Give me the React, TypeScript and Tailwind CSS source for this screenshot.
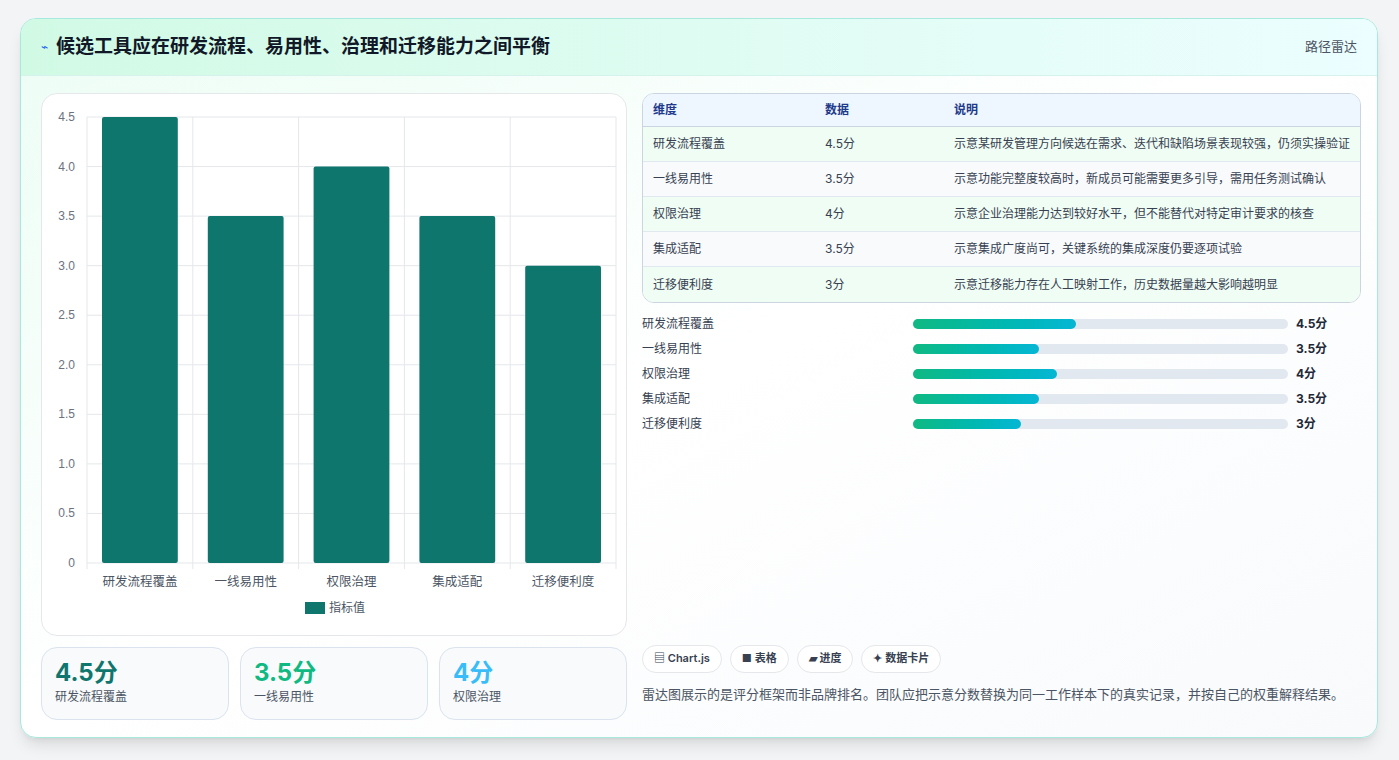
import React from "react";

const rows = [
  ["研发流程覆盖", "4.5分", "示意某研发管理方向候选在需求、迭代和缺陷场景表现较强，仍须实操验证"],
  ["一线易用性", "3.5分", "示意功能完整度较高时，新成员可能需要更多引导，需用任务测试确认"],
  ["权限治理", "4分", "示意企业治理能力达到较好水平，但不能替代对特定审计要求的核查"],
  ["集成适配", "3.5分", "示意集成广度尚可，关键系统的集成深度仍要逐项试验"],
  ["迁移便利度", "3分", "示意迁移能力存在人工映射工作，历史数据量越大影响越明显"],
];
const vals = [4.5, 3.5, 4, 3.5, 3];
const fills = [163, 126, 144, 126, 108];

function Chart() {
  // coordinates relative to card (40,93)
  const x0 = 45, x1 = 574, yTop = 23, yBot = 469;
  const ticks = [0, 0.5, 1, 1.5, 2, 2.5, 3, 3.5, 4, 4.5];
  const cw = (x1 - x0) / 5;
  return (
    <svg width="586" height="541" className="block">
      {ticks.map((t) => {
        const y = yBot - (t / 4.5) * (yBot - yTop);
        return (
          <g key={t}>
            <line x1={x0} x2={x1} y1={y} y2={y} stroke="#e5e7eb" />
            <text x={x0 - 12} y={y + 4} textAnchor="end" fontSize="12" fill="#6b7280" fontFamily="Liberation Sans, sans-serif">
              {t === 0 ? "0" : t.toFixed(1)}
            </text>
          </g>
        );
      })}
      {[0, 1, 2, 3, 4, 5].map((i) => (
        <line key={i} x1={x0 + i * cw} x2={x0 + i * cw} y1={yTop} y2={yBot + 6} stroke="#e5e7eb" />
      ))}
      {vals.map((v, i) => {
        const y = yBot - (v / 4.5) * (yBot - yTop);
        return <rect key={i} x={x0 + i * cw + 15} y={y} width={cw - 30} height={yBot - y} rx="2" fill="#0f766e" />;
      })}
      {rows.map((r, i) => (
        <text key={i} x={x0 + i * cw + cw / 2} y={492} textAnchor="middle" fontSize="12.5" fill="#4b5563" fontFamily="Noto Sans CJK SC, sans-serif">
          {r[0]}
        </text>
      ))}
      <rect x="263" y="508" width="20" height="12" fill="#0f766e" />
      <text x="287" y="518" fontSize="12" fill="#4b5563" fontFamily="Noto Sans CJK SC, sans-serif">指标值</text>
    </svg>
  );
}

export default function App() {
  return (
    <div className="w-[1399px] h-[760px] bg-[#f3f4f6] p-[18px_20px] pl-[20px] pt-[18px]" style={{ fontFamily: "Inter, 'Noto Sans CJK SC', sans-serif" }}>
      <div className="w-[1358px] h-[720px] rounded-2xl border border-[#a7e9dd] bg-gradient-to-br from-[#ecfdf5] via-white to-[#f8fafc] shadow-lg overflow-hidden flex flex-col">
        <div className="h-[57px] shrink-0 flex items-center justify-between px-5 bg-gradient-to-r from-[#d1fae5] to-[#ecfeff] border-b border-[#d5f3ec]">
          <div className="flex items-center gap-2">
            <span className="text-[#2563eb] text-xs">⌁</span>
            <span className="text-[19px] font-bold text-[#111827]">候选工具应在研发流程、易用性、治理和迁移能力之间平衡</span>
          </div>
          <span className="text-[13px] text-[#4b5563]">路径雷达</span>
        </div>
        <div className="flex gap-[15px] px-5 pt-[17px]">
          <div className="w-[586px] flex flex-col gap-[11px]">
            <div className="h-[543px] rounded-2xl border border-[#e5e7eb] bg-white">
              <Chart />
            </div>
            <div className="flex gap-[11px]">
              {[
                ["4.5分", "研发流程覆盖", "text-[#0f766e]"],
                ["3.5分", "一线易用性", "text-[#10b981]"],
                ["4分", "权限治理", "text-[#38bdf8]"],
              ].map(([v, l, c]) => (
                <div key={l} className="w-[189px] h-[73px] rounded-2xl border border-[#dbe3ee] bg-[#f8fafc] px-[13px] pt-[10px]">
                  <div className={`text-[24px] font-bold leading-[30px] ${c}`}>{v}</div>
                  <div className="text-[12px] text-[#4b5563]">{l}</div>
                </div>
              ))}
            </div>
          </div>
          <div className="flex-1 flex flex-col">
            <div className="w-[719px] rounded-xl border border-[#cbd5e1] overflow-hidden bg-white text-[12px] text-[#374151]">
              <div className="flex h-[33px] items-center bg-[#eef6ff] text-[#1e3a8a] font-semibold border-b border-[#cbd5e1]">
                <div className="w-[172px] pl-[10px]">维度</div>
                <div className="w-[129px] pl-[10px]">数据</div>
                <div className="pl-[10px]">说明</div>
              </div>
              {rows.map((r, i) => (
                <div key={i} className={`flex h-[35px] items-center ${i % 2 ? "bg-[#f8fafc]" : "bg-[#f0fdf4]"} ${i < 4 ? "border-b border-[#e2e8f0]" : ""}`}>
                  <div className="w-[172px] pl-[10px]">{r[0]}</div>
                  <div className="w-[129px] pl-[10px]">{r[1]}</div>
                  <div className="pl-[10px] whitespace-nowrap">{r[2]}</div>
                </div>
              ))}
            </div>
            <div className="flex flex-col gap-[8px] mt-[12px] text-[12px]">
              {rows.map((r, i) => (
                <div key={i} className="flex items-center h-[17px]">
                  <div className="w-[271px] text-[#374151]">{r[0]}</div>
                  <div className="w-[375px] h-[10px] rounded-full bg-[#e2e8f0]">
                    <div className="h-full rounded-full bg-gradient-to-r from-[#10b981] to-[#06b6d4]" style={{ width: fills[i] }} />
                  </div>
                  <div className="ml-[8px] font-bold text-[#1f2937]">{r[1]}</div>
                </div>
              ))}
            </div>
            <div className="mt-auto flex gap-2 text-[11px] font-semibold text-[#374151]">
              {["▤ Chart.js", "■ 表格", "▰ 进度", "✦ 数据卡片"].map((t) => (
                <span key={t} className="h-[28px] px-[11px] flex items-center rounded-full border border-[#e5e7eb] bg-white">{t}</span>
              ))}
            </div>
            <div className="mt-[12px] mb-[16px] text-[13px] text-[#4b5563]">雷达图展示的是评分框架而非品牌排名。团队应把示意分数替换为同一工作样本下的真实记录，并按自己的权重解释结果。</div>
          </div>
        </div>
      </div>
    </div>
  );
}
